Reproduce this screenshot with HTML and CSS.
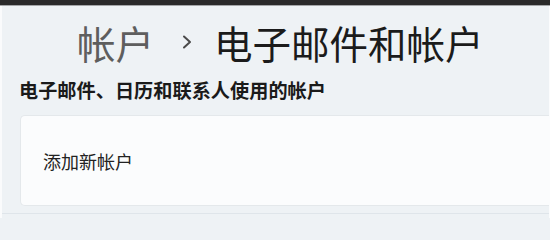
FILE: index.html
```html
<!DOCTYPE html>
<html lang="zh-CN">
<head>
<meta charset="utf-8">
<title>电子邮件和帐户</title>
<link rel="stylesheet" href="styles.css">
</head>
<body>
<div class="topbar"></div>
<main class="page">
  <nav class="crumbs">
    <span class="crumb-parent">帐户</span>
    <svg class="chev" width="12" height="14" viewBox="0 0 12 14" aria-hidden="true"><path d="M3 1.5 L9 7 L3 12.5" fill="none" stroke="#4a4a4a" stroke-width="2" stroke-linecap="round" stroke-linejoin="round"/></svg>
    <span class="crumb-current">电子邮件和帐户</span>
  </nav>
  <h2 class="subtitle">电子邮件、日历和联系人使用的帐户</h2>
  <div class="card">
    <span class="card-label">添加新帐户</span>
  </div>
  <div class="bottom-line"></div>
</main>
</body>
</html>
```
FILE: styles.css
```css
html, body {
  margin: 0;
  padding: 0;
}
body {
  width: 550px;
  height: 218px;
  overflow: hidden;
  background: #eef2f5;
  font-family: "Noto Sans CJK SC", "Noto Sans", sans-serif;
}
.topbar {
  height: 5px;
  background: #2a2a2a;
  border-bottom: 1px solid #a4a6a8;
}
.page {
  box-sizing: border-box;
  height: 212px;
  border-left: 2px solid #fafbfc;
  border-right: 1px solid #fbfcfd;
  padding-top: 14px;
  display: flex;
  flex-direction: column;
}
.crumbs {
  display: flex;
  align-items: center;
  height: 44px;
  margin-left: 75px;
  font-size: 38.5px;
  line-height: 44px;
  font-weight: 400;
}
.crumb-parent {
  color: #5e5e5e;
}
.chev {
  margin-left: 27px;
  margin-right: 21px;
  flex: none;
}
.crumb-current {
  color: #1b1b1b;
}
.subtitle {
  margin: 13px 0 0 17px;
  font-size: 19.2px;
  line-height: 26px;
  font-weight: 700;
  color: #1a1a1a;
}
.card {
  box-sizing: border-box;
  height: 91px;
  margin: 12px 0 0 18px;
  background: #fbfcfd;
  border: 1px solid #e4e8eb;
  border-right: none;
  border-radius: 5px 0 0 5px;
  display: flex;
  align-items: center;
  padding-left: 22px;
}
.card-label {
  font-size: 18px;
  line-height: 24px;
  color: #222;
}
.bottom-line {
  margin-top: 7px;
  height: 1px;
  background: #dfe5ea;
}
```
